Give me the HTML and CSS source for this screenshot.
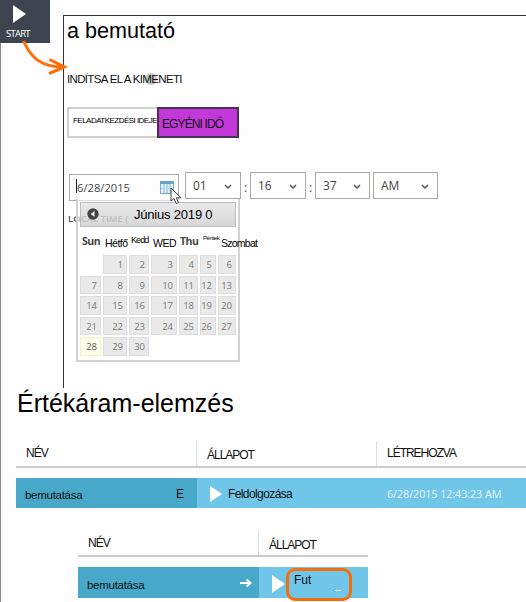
FILE: index.html
```html
<!DOCTYPE html>
<html lang="hu">
<head>
<meta charset="utf-8">
<title>Értékáram-elemzés</title>
<link rel="stylesheet" href="styles.css">
</head>
<body>
<main class="page">
  <section class="top">
    <div class="start"><svg width="13" height="18" viewBox="0 0 13 18"><path d="M0 0 13 9 0 18Z" fill="#fff"/></svg><span>START</span></div>
    <div class="panel">
      <h1><span>a bemutató</span></h1>
      <div class="output-label"><i class="click-dot"></i><span>INDÍTSA EL A KIMENETI</span></div>
      <div class="toggle">
        <div class="option job"><span>FELADATKEZDÉSI IDEJE</span></div>
        <div class="option custom"><span>EGYÉNI IDŐ</span></div>
      </div>
      <div class="time-row">
        <div class="date-input"><span>6/28/2015</span><i class="caret"></i>
          <svg class="cal-icon" width="14" height="14" viewBox="0 0 14 14"><path d="M.5 1.5h13v12H.5z" fill="#e5f3f8" stroke="#72aec9"/><path d="M0 1h14v3H0z" fill="#61a8c8"/><path d="M4 4v9M7 4v9M10 4v9" stroke="#7eb7d0"/><path d="M1 8.5h12" stroke="#b9dae7"/></svg>
        </div>
        <div class="select hour"><span>01</span><svg width="8" height="6" viewBox="0 0 8 6"><path d="m1 1 3 3 3-3"/></svg></div><b>:</b>
        <div class="select minute"><span>16</span><svg width="8" height="6" viewBox="0 0 8 6"><path d="m1 1 3 3 3-3"/></svg></div><b>:</b>
        <div class="select second"><span>37</span><svg width="8" height="6" viewBox="0 0 8 6"><path d="m1 1 3 3 3-3"/></svg></div>
        <div class="select ampm"><span>AM</span><svg width="8" height="6" viewBox="0 0 8 6"><path d="m1 1 3 3 3-3"/></svg></div>
      </div>
      <div class="local">LOCAL TIME (</div>
    </div>
  </section>

  <div class="calendar">
    <div class="month"><svg width="12" height="12" viewBox="0 0 12 12"><circle cx="6" cy="6" r="5.7" fill="#444"/><path d="M7.5 3v6L3.7 6Z" fill="#eee"/></svg><span>Június 2019 0</span></div>
    <div class="weekdays"><b>Sun</b><span class="mon">Hétfő</span><span class="tue">Kedd</span><span class="wed">WED</span><b>Thu</b><span class="fri">Péntek</span><span class="sat">Szombat</span></div>
    <div class="days">
      <i></i><span>1</span><span>2</span><span>3</span><span>4</span><span>5</span><span>6</span>
      <span>7</span><span>8</span><span>9</span><span>10</span><span>11</span><span>12</span><span>13</span>
      <span>14</span><span>15</span><span>16</span><span>17</span><span>18</span><span>19</span><span>20</span>
      <span>21</span><span>22</span><span>23</span><span>24</span><span>25</span><span>26</span><span>27</span>
      <span class="today">28</span><span>29</span><span>30</span>
    </div>
  </div>

  <h2><span>Értékáram-elemzés</span></h2>
  <section class="jobs">
    <div class="head"><div class="name">NÉV</div><div class="state">ÁLLAPOT</div><div class="created">LÉTREHOZVA</div></div>
    <div class="row"><div class="cell-name"><span class="job-name">bemutatása</span><span class="mark">E</span></div><div class="cell-state"><svg width="12" height="16" viewBox="0 0 12 16"><path d="M0 0 12 8 0 16Z" fill="#fff"/></svg><span>Feldolgozása</span></div><div class="cell-date">6/28/2015 12:43:23 AM</div></div>
  </section>
  <section class="jobs small">
    <div class="head"><div class="name">NÉV</div><div class="state">ÁLLAPOT</div></div>
    <div class="row"><div class="cell-name"><span class="job-name">bemutatása</span><svg class="go" width="12" height="10" viewBox="0 0 12 10"><path d="M0 5h10M6.500 1.500 10.500 5 6.500 8.500" fill="none" stroke="#fff" stroke-width="2"/></svg></div><div class="cell-state"><svg width="13" height="18" viewBox="0 0 13 18"><path d="M0 0 13 9 0 18Z" fill="#fff"/></svg><div class="ring"><span>Fut</span><i></i></div></div></div>
  </section>

  <svg class="arrow" width="60" height="50" viewBox="0 0 60 50"><path d="M13.500 1C21 18 31 27 54 27M39.500 19.500 54.500 27 39 33.500" fill="none" stroke="#ff6d06" stroke-width="3"/></svg>
  <svg class="pointer" width="12" height="18" viewBox="0 0 12 18"><path d="M1 1v13l3-2.500 2.200 5 2.300-1-2.200-4.700H11Z" fill="#fff" stroke="#444"/></svg>
</main>
</body>
</html>
```

FILE: styles.css
```css
* { box-sizing: border-box; }
body { margin: 0; background: #fff; font: 12px "Liberation Sans", Arial, sans-serif; color: #111; }
.page { position: relative; width: 526px; height: 602px; overflow: hidden; background: linear-gradient(#888, #888) 0 0 / 1px 100% no-repeat #fefefe; }
.page span { white-space: nowrap; }
h1, h2 { margin: 0; font-weight: 400; color: #000; white-space: nowrap; }
svg { display: block; flex: none; }

.top { display: grid; grid-template-columns: 63px 1fr; height: 388px; }
.start { width: 50px; height: 43px; padding-top: 5px; background: #3e444f; color: #fff; display: flex; flex-direction: column; }
.start svg { margin-left: 13px; }
.start span { margin: 4px 0 0 6px; font: 9.5px/14px "Open Sans", sans-serif; letter-spacing: -.75px; }
.panel { margin-top: 15px; border: solid #333; border-width: 1px 0 0 1px; }
h1 { height: 48px; padding: 2px 0 0 3px; font-size: 21.6px; line-height: 26px; }
.output-label { position: relative; height: 28px; padding: 8px 0 0 3px; font-size: 11.5px; line-height: 14px; letter-spacing: -.66px; }
.output-label span { position: relative; }
.click-dot { position: absolute; left: 81px; top: 9px; width: 12px; height: 12px; border-radius: 50%; background: #c8c6c4; }
.toggle { display: flex; margin: 15px 0 0 3px; width: 172px; height: 31px; }
.option { border: 2px solid #d0d0d0; }
.job { width: 90px; border-right: 0; padding: 6px 0 0 4px; font-size: 8px; line-height: 12px; letter-spacing: -.53px; color: #000; }
.custom { width: 82px; background: #c338d8; border-color: #4a3151; padding: 7px 0 0 3px; font-size: 12px; line-height: 16px; letter-spacing: -.88px; }
.time-row { display: flex; margin: 34px 0 0 5px; height: 29px; color: #444; font: 12px/24px "Open Sans", sans-serif; }
.time-row b { width: 9px; padding: 4px 0 0 3px; font-weight: 400; }
.date-input { position: relative; width: 110px; height: 27px; margin: 2px 6px 0 0; border: 1px solid #aaa; padding: 1px 0 0 7px; font-size: 11.200px; display: flex; }
.caret { position: absolute; left: 6px; top: 4px; width: 1px; height: 14px; background: #222; }
.cal-icon { margin: 4px 0 0 30px; }
.select { height: 27px; border: 1px solid #aaa; display: flex; justify-content: space-between; padding: 1px 8px 0 7px; }
.select svg { margin-top: 10px; fill: none; stroke: #555; stroke-width: 1.500; }
.hour { width: 56px; }
.minute { width: 56px; }
.second { width: 55px; margin-right: 3px; }
.ampm { width: 65px; }
.local { margin: 11px 0 0 4px; font: 600 9.500px/14px "Open Sans", sans-serif; color: #555; }

.calendar { position: absolute; left: 76px; top: 199px; width: 164px; height: 163px; padding: 3px 2px; border: 2px solid #d2d2d2; border-top: 0; background: #ffffff99; }
.month { display: flex; height: 25px; border: 1px solid #bbb; background: linear-gradient(#d8d8d890, #b8b8b890); }
.month svg { margin: 5px 0 0 6px; }
.month span { margin: 3px 0 0 35px; font-size: 13px; line-height: 18px; letter-spacing: -.2px; color: #000; }
.weekdays { display: grid; grid-template-columns: 23px 26px 22px 27px 23px 18px 40px; height: 28px; padding: 6px 0 0 2px; font-size: 10.500px; line-height: 18px; color: #000; }
.weekdays b { font: 700 10.500px/16px "Open Sans", sans-serif; color: #444; letter-spacing: -.5px; }
.mon { letter-spacing: -.5px; padding-top: 1px; }
.tue { font-size: 9px; line-height: 14px; letter-spacing: -.9px; }
.wed { letter-spacing: -.5px; padding-top: 1px; }
.fri { font-size: 6px; line-height: 10px; letter-spacing: -.4px; }
.sat { font-size: 10.500px; letter-spacing: -.75px; padding-top: 1px; }
.days { display: grid; grid-template-columns: 21px 24px 20px 26px 19px 16px 18px; grid-auto-rows: 18.500px; gap: 2px; }
.days span { border: 1px solid #ddd; background: #e9e9e9; padding-right: 3px; text-align: right; font: 9.500px/18px "Open Sans", sans-serif; color: #777; }
.days .today { background: #fffdec; border-color: #f5f1c8; color: #555; }

h2 { padding-left: 17px; font-size: 25px; line-height: 30px; height: 53px; }
.jobs { margin-left: 16px; width: 510px; }
.head { display: grid; grid-template-columns: 180px 180px 1fr; height: 27px; border-bottom: 2px solid #ccc; letter-spacing: -1.020px; line-height: 14px; }
.head div { padding: 5px 0 0 10px; border-left: 1px solid #ddd; }
.head .name { border: 0; }
.head .state { padding-top: 7px; }
.row { display: grid; grid-template-columns: 181px 180px 1fr; height: 30px; margin-top: 10px; background: #70c6e9; line-height: 16px; }
.cell-name { display: flex; justify-content: space-between; padding: 0 13px 0 9px; background: #48a8c9; }
.job-name { padding-top: 9px; font-size: 11.500px; letter-spacing: -.28px; }
.mark { padding-top: 8px; }
.cell-state { display: flex; padding-left: 13px; }
.cell-state svg { margin-top: 8px; }
.cell-state > span { margin: 8px 0 0 6px; letter-spacing: -.6px; }
.cell-date { padding: 8px 0 0 10px; font: 10.800px/16px "Open Sans", sans-serif; color: #e4f5fb; letter-spacing: -.08px; }
.small { margin: 23px 0 0 78px; width: 290px; }
.small .head { height: 26px; grid-template-columns: 180px 1fr; }
.small .row { height: 31px; grid-template: 31px / 181px 1fr; }
.go { margin-top: 11px; }
.small .cell-name { padding-right: 7px; }
.small .job-name { padding-top: 10px; }
.ring { position: relative; width: 66px; height: 33px; margin: 1px 0 0 1px; border: 3px solid #f76c0b; border-radius: 9px; padding: 1px 0 0 5px; line-height: 16px; flex: none; }
.ring i { position: absolute; right: 8px; bottom: 7px; width: 6px; height: 1px; background: #fff; }
.arrow { position: absolute; left: 10px; top: 40px; }
.pointer { position: absolute; left: 170px; top: 187px; }
```
